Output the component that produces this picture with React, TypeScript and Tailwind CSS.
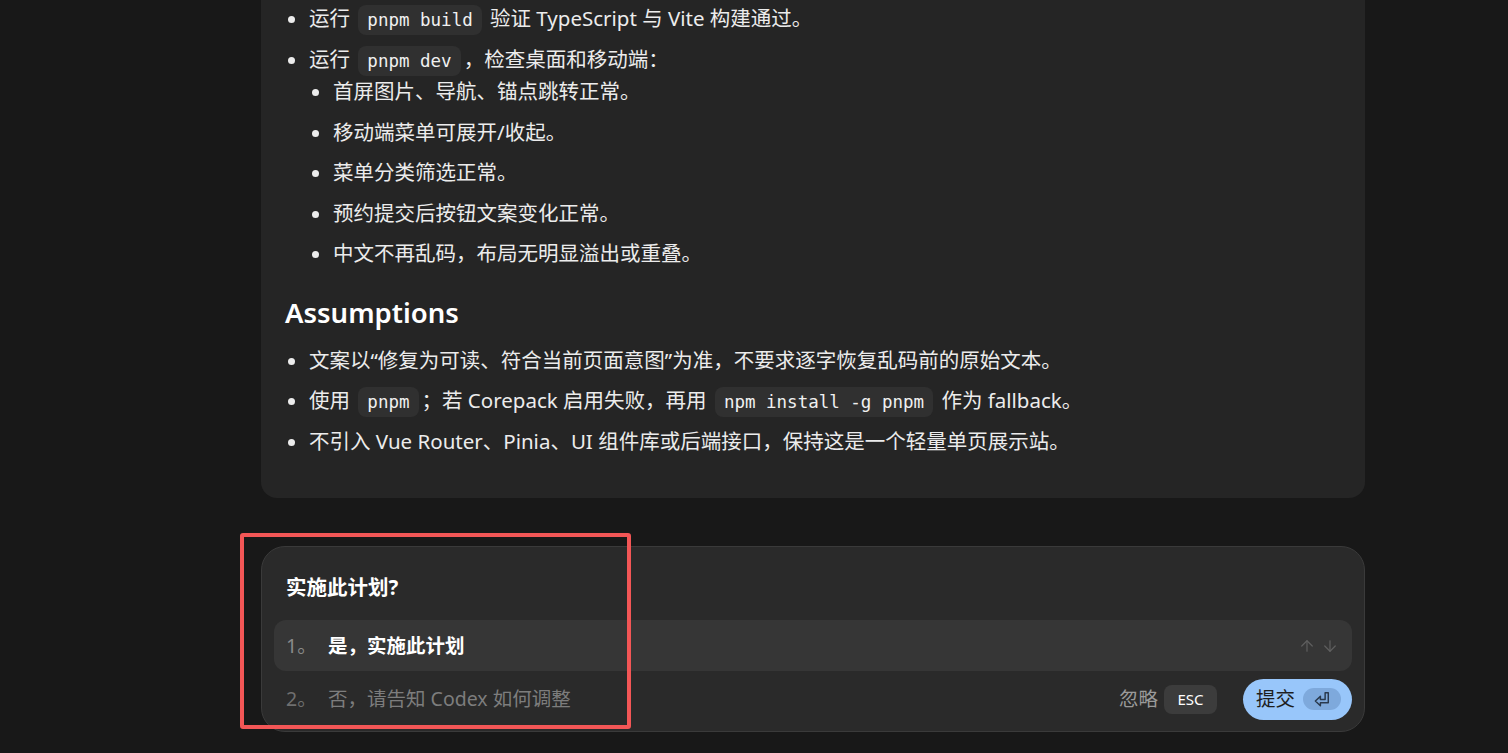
import { ArrowUp, ArrowDown } from "lucide-react";

const Code = ({ children }: { children: React.ReactNode }) => (
    <code className="mx-[3px] px-[9px] py-[5px] rounded-lg bg-[#303030] text-[#f0f0f0] font-['DejaVu_Sans_Mono','Liberation_Mono',monospace] text-[17.5px] leading-none">
        {children}
    </code>
);

const ReturnIcon = () => (
    <svg width="21" height="19" viewBox="0 0 20 18" fill="none">
        <path
            d="M12.5 2.5 H15.5 V12 H8 V15 L3.2 10.5 L8 6 V9 H12.5 Z"
            stroke="#2a3a4e"
            strokeWidth="1.4"
            strokeLinejoin="round"
        />
    </svg>
);

const App = () => {
    return (
        <div className="relative w-[1508px] h-[753px] overflow-hidden bg-[#181818] text-[#ececec] font-['Noto_Sans','Noto_Sans_CJK_SC',sans-serif]">

            {/* plan card (scrolled, top cut off) */}
            <div className="ml-[261px] w-[1104px] rounded-b-2xl bg-[#252525] px-6 pt-[2px] pb-[41px] text-[20.5px] leading-[32.5px]">
                <ul className="list-disc pl-6 space-y-2">
                    <li>运行 <Code>pnpm build</Code> 验证 TypeScript 与 Vite 构建通过。</li>
                    <li>
                        运行 <Code>pnpm dev</Code>，检查桌面和移动端：
                        <ul className="list-disc pl-6 space-y-2">
                            <li>首屏图片、导航、锚点跳转正常。</li>
                            <li>移动端菜单可展开/收起。</li>
                            <li>菜单分类筛选正常。</li>
                            <li>预约提交后按钮文案变化正常。</li>
                            <li>中文不再乱码，布局无明显溢出或重叠。</li>
                        </ul>
                    </li>
                </ul>

                <h2 className="mt-[25px] mb-[13px] text-[27.5px] leading-[36px] font-semibold text-white">Assumptions</h2>

                <ul className="list-disc pl-6 space-y-2">
                    <li>文案以“修复为可读、符合当前页面意图”为准，不要求逐字恢复乱码前的原始文本。</li>
                    <li>使用 <Code>pnpm</Code>；若 Corepack 启用失败，再用 <Code>npm install -g pnpm</Code> 作为 fallback。</li>
                    <li>不引入 Vue Router、Pinia、UI 组件库或后端接口，保持这是一个轻量单页展示站。</li>
                </ul>
            </div>

            {/* question composer */}
            <div className="mt-[48px] ml-[261px] w-[1104px] h-[186px] rounded-[24px] border border-[#3a3a3a] bg-[#2a2a2a] px-3 pt-[26px] text-[19.5px]">
                <div className="px-3 leading-[28px] text-[20.5px] font-bold text-white">实施此计划?</div>

                <div className="mt-[19px] h-[51px] flex items-center rounded-xl bg-[#363636] px-3">
                    <span className="w-[42px] text-[#8a8a8a]">1。</span>
                    <span className="font-bold text-white">是，实施此计划</span>
                    <div className="ml-auto flex items-center gap-[5px] pr-[1px] text-[#5f5f5f]">
                        <ArrowUp size={18} strokeWidth={1.6} />
                        <ArrowDown size={18} strokeWidth={1.6} />
                    </div>
                </div>

                <div className="mt-[2px] h-[52px] flex items-center pl-3">
                    <span className="w-[42px] text-[#6f6f6f]">2。</span>
                    <span className="text-[#7d7d7d]">否，请告知 Codex 如何调整</span>
                    <div className="ml-auto flex items-center">
                        <span className="text-[#9a9a9a]">忽略</span>
                        <span className="ml-[6px] h-[29px] w-[53px] flex items-center justify-center rounded-lg bg-[#3c3c3c] text-[15px] text-white">ESC</span>
                        <button className="ml-[26px] h-[41px] w-[109px] flex items-center rounded-full bg-[#98c6fa] pl-[13px] text-[#1e1e1e]">
                            提交
                            <span className="ml-2 h-[22px] w-[38px] flex items-center justify-center rounded-full bg-[#7ea9dc]">
                                <ReturnIcon />
                            </span>
                        </button>
                    </div>
                </div>
            </div>

            {/* annotation */}
            <div className="absolute left-[240px] top-[533px] w-[391px] h-[196px] rounded-[3px] border-4 border-[#f35656]" />
        </div>
    );
};

export default App;
